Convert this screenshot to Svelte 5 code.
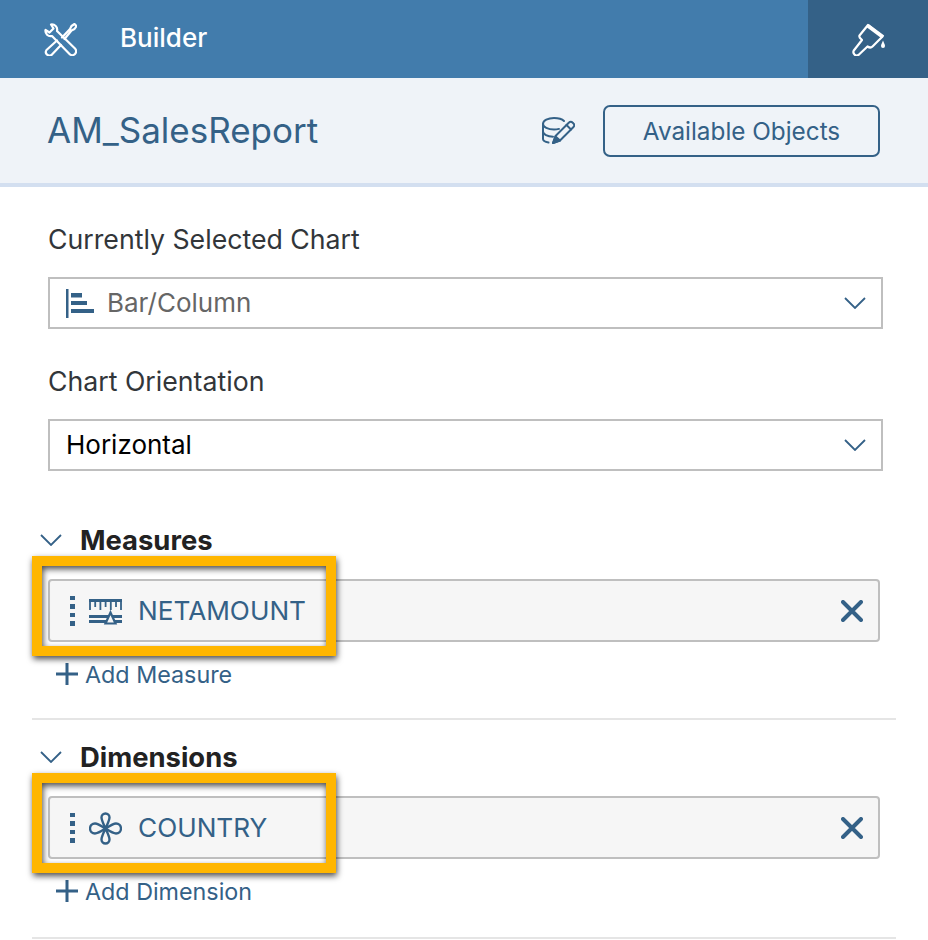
<script>
  const sections = [
    { title: 'Measures', token: 'NETAMOUNT', icon: 'measure', add: 'Add Measure' },
    { title: 'Dimensions', token: 'COUNTRY', icon: 'dimension', add: 'Add Dimension' }
  ];
</script>

<div class="panel">
  <header class="shell">
    <svg class="tools" viewBox="0 0 33 33" fill="none" stroke="#fff" stroke-width="2.2" stroke-linejoin="round" stroke-linecap="round">
      <path d="M7 1.500 9.500 5.500 5.500 9.500 1.500 7C1 10.500 4 14 8 13L25.500 31A3.700 3.700 0 0 0 31 25.500L13 8C14 4 10.500 1 7 1.500Z" />
      <path d="M13 17.500 2.500 27A3.600 3.600 0 0 0 7.500 32L17 22" />
      <path d="M18 14.500 26 6 27.500 3 30.500 1 32.500 3 30.500 6 27.500 7.500 20.500 16" />
    </svg>
    <span class="shell-title">Builder</span>
    <div class="shell-action">
      <svg class="brush" viewBox="0 0 33 33" fill="none" stroke="#fff" stroke-width="2.2" stroke-linejoin="round" stroke-linecap="round">
        <path d="M16 2 7.500 12.500C6.500 14 9 16 10 17L1.800 27.500A3.400 3.400 0 0 0 6.500 32L15.500 23.500C17 24.500 19 25 20.500 23.500L30.500 13.500Z" />
        <path d="M15.500 2.500 31 14" stroke-width="4" stroke-linecap="butt" />
        <path d="M31 17.500C30 20 29 21.500 29 23a2 2 0 0 0 4 0C33 21.500 32 20 31 17.500Z" fill="#fff" stroke="none" />
      </svg>
    </div>
  </header>

  <div class="subheader">
    <h1>AM_SalesReport</h1>
    <svg class="db-edit" viewBox="0 0 33 27" fill="none" stroke="#346187" stroke-width="2" stroke-linecap="round" stroke-linejoin="round">
      <path d="M22 4C20 2 16 1 12 1 6 1 1 3.500 1 7c0 3 5 5.500 11 5.500 2 0 3.500-.2 5-.6" />
      <path d="M1 7v15c0 1.800 2.500 3 5.500 3.500" />
      <path d="M1 14.500c0 2.700 4.500 5 10 5.200" />
      <path d="M11 26 13.500 19 27 5.500a2.400 2.400 0 0 1 3.500 0l1 1a2.400 2.400 0 0 1 0 3.500L18 23.500Z" />
      <path d="M24.500 8 29 12.500" />
      <path d="M11 26 13.500 19.500 18 23.500Z" fill="#346187" />
    </svg>
    <button class="objects">Available Objects</button>
  </div>

  <main class="content">
    <div class="field">
      <div class="label">Currently Selected Chart</div>
      <div class="select muted">
        <svg class="bars" viewBox="0 0 29 29" fill="#346187">
          <rect x="0" y="0" width="2.500" height="29" />
          <rect x="5" y="4" width="11" height="4.500" />
          <rect x="5" y="12" width="16" height="4" />
          <rect x="5" y="20" width="23" height="4" />
        </svg>
        <span class="value">Bar/Column</span>
        {@render chevron('select-arrow')}
      </div>
    </div>

    <div class="field second">
      <div class="label">Chart Orientation</div>
      <div class="select">
        <span class="value">Horizontal</span>
        {@render chevron('select-arrow')}
      </div>
    </div>

    {#each sections as section}
      <section class="group">
        <div class="group-head">
          {@render chevron('group-arrow')}
          <h2>{section.title}</h2>
        </div>
        <div class="token-row">
          <div class="grip"><i></i><i></i><i></i><i></i></div>
          {#if section.icon === 'measure'}
            <svg class="token-icon measure" viewBox="0 0 33 26" fill="none" stroke="#346187" stroke-width="1.800">
              <path d="M0 1.500h33" stroke-width="3" />
              <path d="M1 1v10M6.200 1v7M11.400 1v10M16.600 1v7M21.800 1v10M27 1v7M32 1v10" />
              <path d="M0 17.500h33M0 22.500h33" stroke-width="3" />
              <path d="M21.500 13.500 26.500 24.500H16.500Z" fill="#f5f5f5" stroke-width="2.200" />
            </svg>
          {:else}
            <svg class="token-icon flower" viewBox="0 0 33 33" fill="none" stroke="#346187" stroke-width="2.400">
              <path d="M16.500 16.500C14 11 12.500 8 12.500 5.500a4 4 0 0 1 8 0c0 2.500-1.500 5.500-4 11Z" />
              <path d="M16.500 16.500C14 22 12.500 25 12.500 27.500a4 4 0 0 0 8 0c0-2.500-1.500-5.500-4-11Z" />
              <path d="M16.500 16.500C11 13 8 11.500 6 11.500a5 5 0 0 0 0 10c2 0 5-1.500 10.500-5Z" />
              <path d="M16.500 16.500C22 13 25 11.500 27 11.500a5 5 0 0 1 0 10c-2 0-5-1.500-10.500-5Z" />
            </svg>
          {/if}
          <span class="token-name">{section.token}</span>
          <svg class="remove" viewBox="0 0 22 22" fill="none" stroke="#346187" stroke-width="4" stroke-linecap="round">
            <path d="M2 2 20 20M20 2 2 20" />
          </svg>
          <div class="callout"></div>
        </div>
        <div class="add">
          <svg class="plus" viewBox="0 0 22 22" stroke="#346187" stroke-width="3"><path d="M0 11h22M11 0v22" /></svg>
          <span>{section.add}</span>
        </div>
      </section>
    {/each}
  </main>
</div>

{#snippet chevron(cls)}
  <svg class={cls} viewBox="0 0 22 12" fill="none" stroke="#346187" stroke-width="1.800"><path d="M1 1 11 11 21 1" /></svg>
{/snippet}

<style>
  :global(body) {
    margin: 0;
    background: #fff;
    font-family: Inter, "Noto Sans", sans-serif;
  }
  .panel {
    width: 928px;
    height: 940px;
    overflow: hidden;
  }
  .shell {
    height: 78px;
    background: #427cac;
    display: flex;
    align-items: center;
    padding-left: 44px;
    box-sizing: border-box;
  }
  .tools {
    width: 33px;
    height: 33px;
  }
  .shell-title {
    margin-left: 43px;
    margin-bottom: 3px;
    color: #fff;
    font-size: 26px;
    font-weight: 500;
  }
  .shell-action {
    margin-left: auto;
    width: 120px;
    height: 78px;
    background: #346187;
    display: flex;
    align-items: center;
    padding-left: 44px;
    box-sizing: border-box;
  }
  .brush {
    width: 33px;
    height: 33px;
  }
  .subheader {
    height: 109px;
    background: #eff3f8;
    border-bottom: 4px solid #d3dff0;
    box-sizing: border-box;
    display: flex;
    align-items: center;
    padding: 0 48px;
  }
  h1 {
    margin: 0 0 2px -1px;
    font-size: 35px;
    font-weight: 400;
    color: #346187;
  }
  .db-edit {
    margin-left: auto;
    width: 33px;
    height: 27px;
  }
  .objects {
    margin-left: 28px;
    width: 277px;
    height: 52px;
    background: transparent;
    border: 2px solid #346187;
    border-radius: 7px;
    color: #346187;
    font: 400 24.3px Inter, sans-serif;
  }
  .content {
    padding: 34px 48px 0 48px;
  }
  .field.second {
    margin-top: 34px;
  }
  .label {
    font-size: 26.7px;
    line-height: 36px;
    color: #32363a;
  }
  .select {
    margin-top: 20px;
    width: 835px;
    height: 52px;
    box-sizing: border-box;
    border: 2px solid #bfbfbf;
    display: flex;
    align-items: center;
    padding: 0 16px;
    font-size: 26px;
    color: #000;
  }
  .select.muted {
    color: #666;
  }
  .value {
    margin-bottom: 2px;
  }
  .bars {
    width: 29px;
    height: 29px;
    margin-right: 12px;
  }
  .select :global(.select-arrow) {
    margin-left: auto;
    width: 22px;
    height: 12px;
    margin-right: -1px;
  }
  .group {
    margin-top: 49px;
    margin-left: -16px;
    width: 864px;
    border-bottom: 2px solid #e5e5e5;
    padding-bottom: 28px;
    box-sizing: border-box;
  }
  .group + .group {
    margin-top: 17px;
    padding-bottom: 30px;
  }
  .group-head {
    display: flex;
    align-items: center;
    height: 40px;
    padding-left: 8px;
  }
  .group-head :global(.group-arrow) {
    width: 22px;
    height: 12px;
  }
  h2 {
    margin: 0 0 0 18px;
    font-size: 27.4px;
    font-weight: 700;
    color: #222;
  }
  .token-row {
    position: relative;
    margin-top: 19px;
    margin-left: 16px;
    width: 832px;
    height: 63px;
    box-sizing: border-box;
    border: 2px solid #bfbfbf;
    border-radius: 4px;
    background: #f6f6f6;
    display: flex;
    align-items: center;
    padding: 0 15px 0 20px;
  }
  .grip {
    display: flex;
    flex-direction: column;
    gap: 4px;
    width: 4.5px;
  }
  .grip i {
    width: 4.5px;
    height: 4.5px;
    background: #346187;
  }
  .token-icon {
    margin-left: 14.5px;
    width: 33px;
  }
  .token-icon.measure {
    height: 26px;
    margin-top: 3px;
  }
  .token-icon.flower {
    height: 33px;
    margin-top: 2px;
  }
  .token-name {
    margin-left: 16px;
    font-size: 26.2px;
    color: #346187;
  }
  .remove {
    margin-left: auto;
    width: 22px;
    height: 22px;
  }
  .callout {
    position: absolute;
    left: -18px;
    top: -25px;
    width: 304px;
    height: 100px;
    box-sizing: border-box;
    border: 10px solid #ffb600;
    filter: drop-shadow(1px 3px 3px rgba(0, 0, 0, .7));
  }
  .add {
    display: flex;
    align-items: center;
    margin-top: 16px;
    padding-left: 24px;
    height: 32px;
    color: #346187;
    font-size: 23.3px;
  }
  .plus {
    width: 22px;
    height: 22px;
    margin-right: 7px;
  }
</style>
